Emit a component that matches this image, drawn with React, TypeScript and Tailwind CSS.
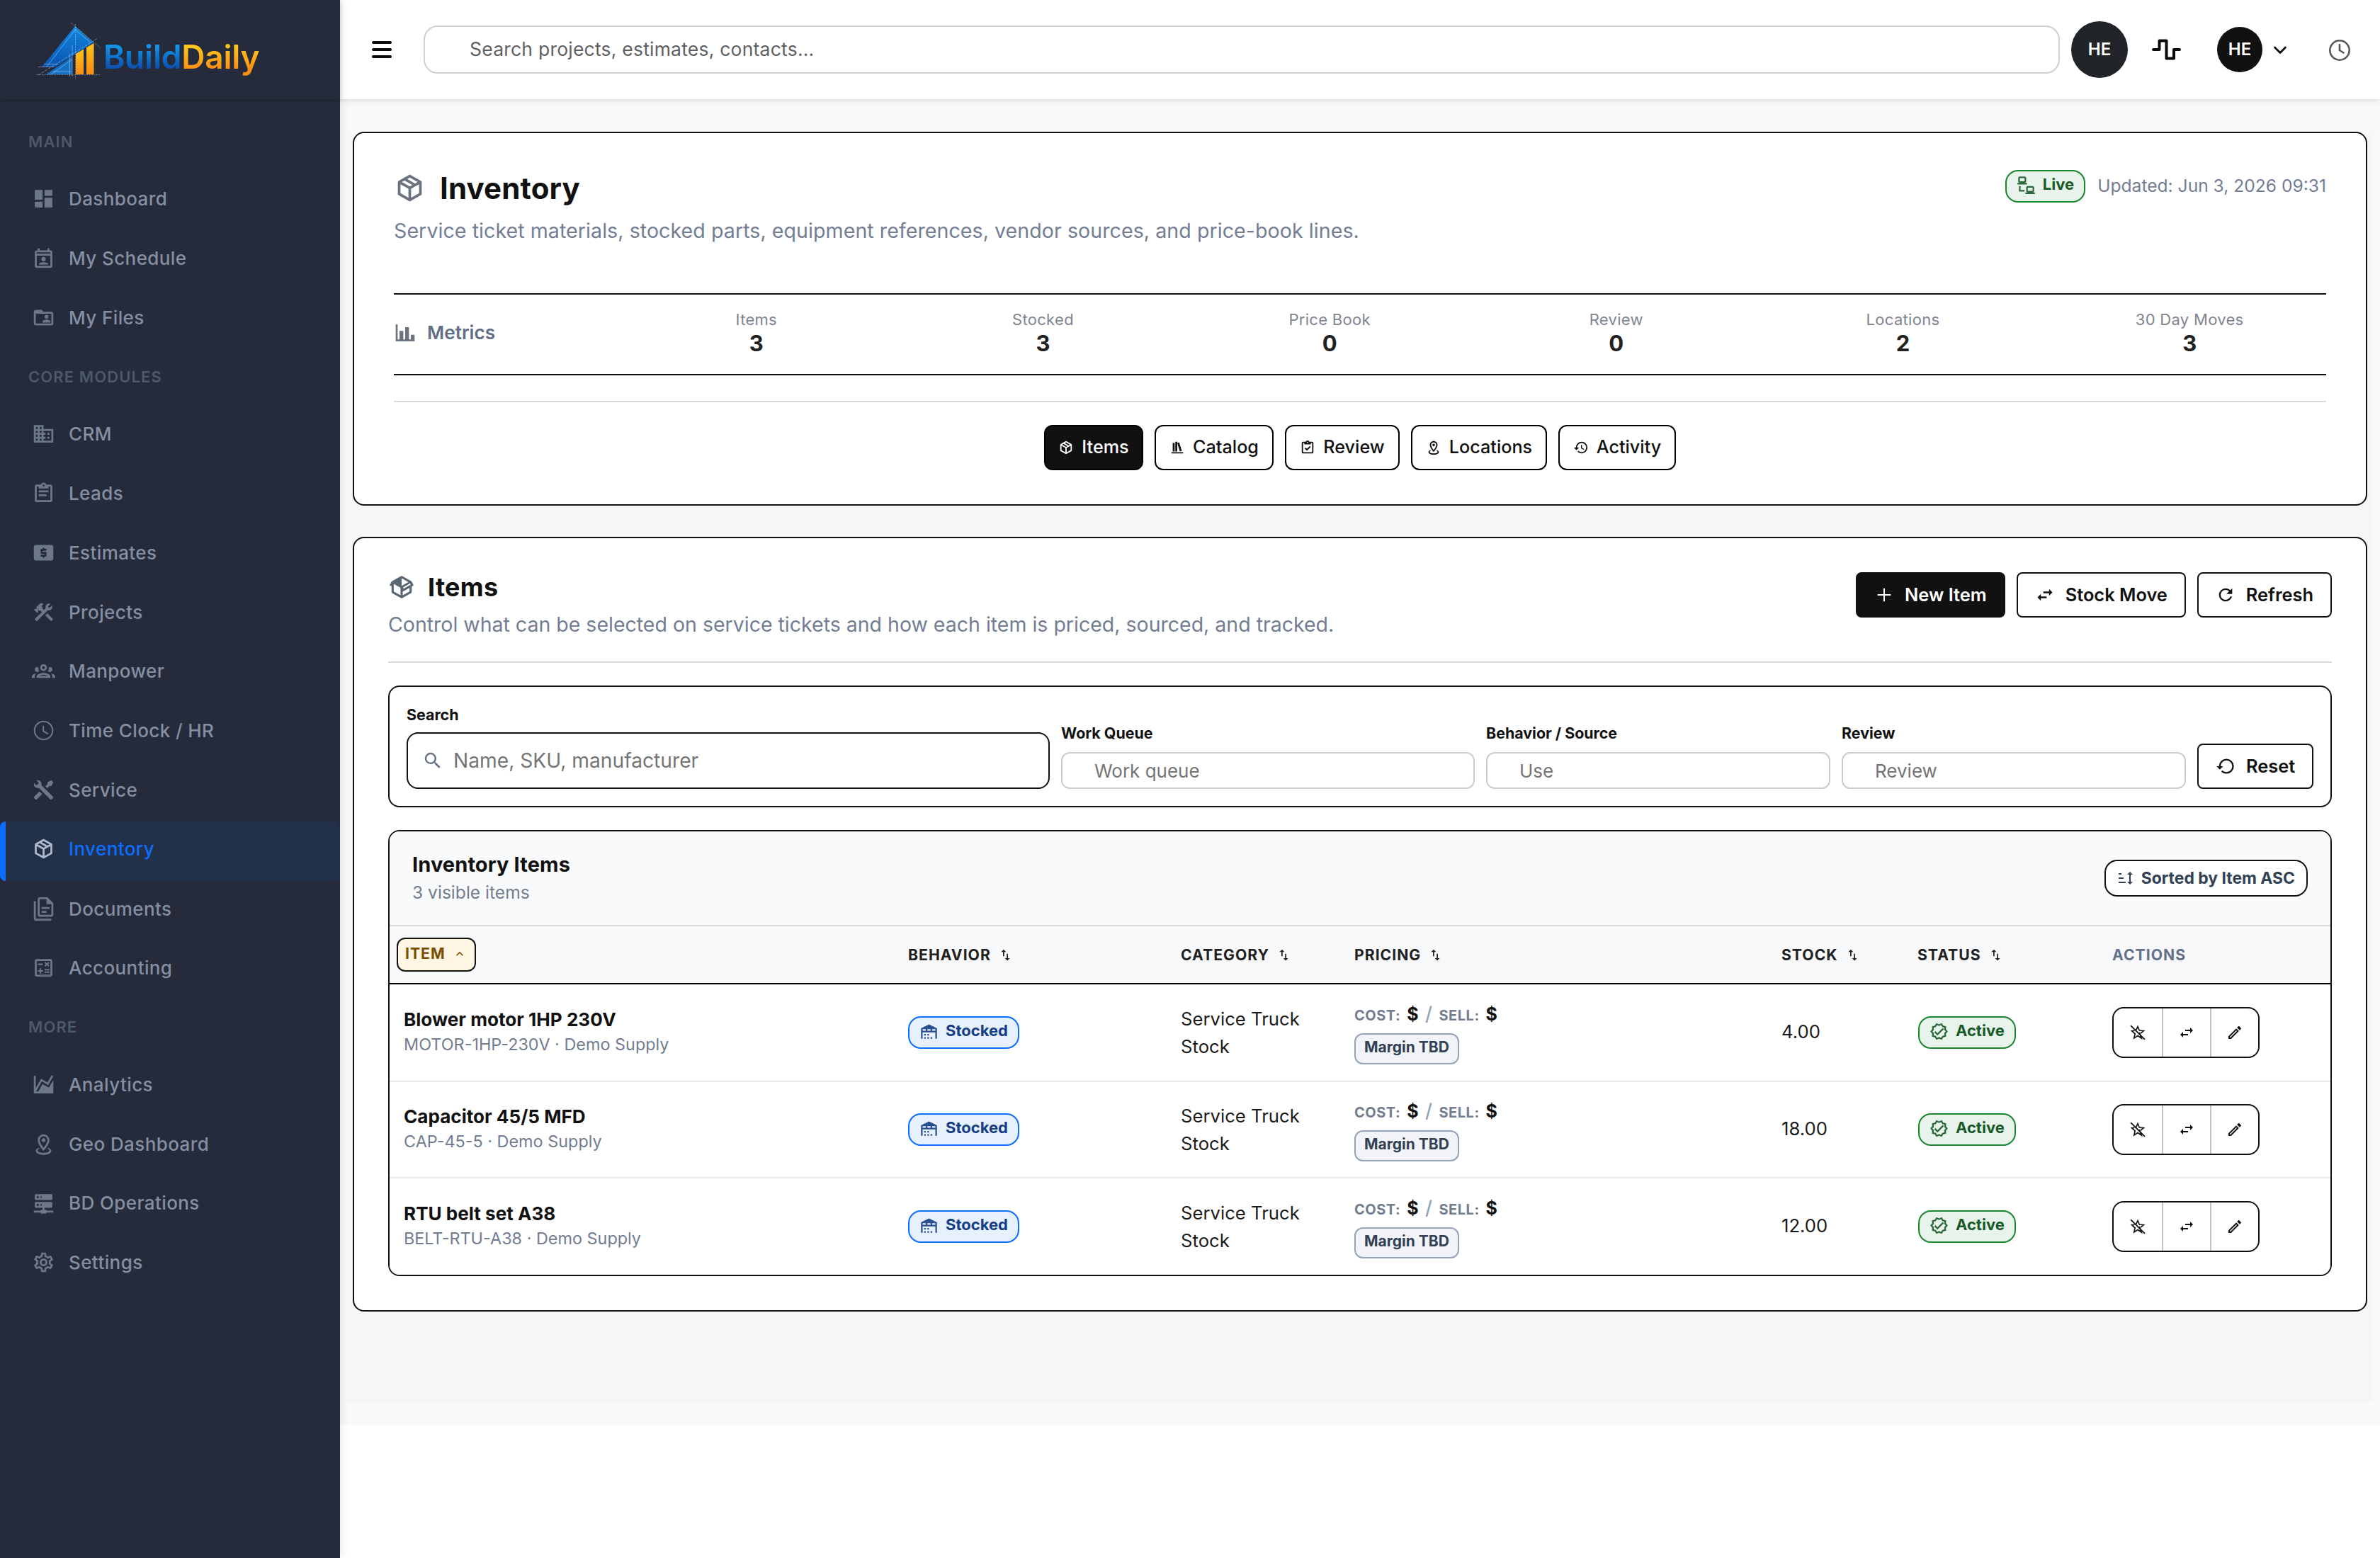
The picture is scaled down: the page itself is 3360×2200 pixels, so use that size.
import clsx from "clsx";
import React from "react";

const paths = {
  dashboard: "M13,3V9H21V3M13,21H21V11H13M3,21H11V15H3M3,13H11V3H3V13Z",
  schedule:
    "M19,4H18V2H16V4H8V2H6V4H5A2,2 0 0,0 3,6V20A2,2 0 0,0 5,22H19A2,2 0 0,0 21,20V6A2,2 0 0,0 19,4M19,20H5V9.5H19V20M5,7.5V6H19V7.5H5M12,10.8A2.2,2.2 0 0,1 14.2,13A2.2,2.2 0 0,1 12,15.2A2.2,2.2 0 0,1 9.8,13A2.2,2.2 0 0,1 12,10.8M7.3,18.8V18C7.3,16.8 10,16.1 12,16.1C14,16.1 16.7,16.8 16.7,18V18.8H7.3Z",
  files:
    "M15 14C16.33 14 19 14.67 19 16V17H11V16C11 14.67 13.67 14 15 14M15 13A2 2 0 0 0 17 11A2 2 0 0 0 15 9A2 2 0 0 0 13 11A2 2 0 0 0 15 13M22 8V18C22 19.11 21.11 20 20 20H4C2.9 20 2 19.11 2 18V6C2 4.89 2.9 4 4 4H10L12 6H20C21.1 6 22 6.9 22 8M20 8H4V18H20V8Z",
  crm: "M18,15H16V17H18M18,11H16V13H18M20,19H12V17H14V15H12V13H14V11H12V9H20M10,7H8V5H10M10,11H8V9H10M10,15H8V13H10M10,19H8V17H10M6,7H4V5H6M6,11H4V9H6M6,15H4V13H6M6,19H4V17H6M12,7V3H2V21H22V7H12Z",
  leads:
    "M19,3H14.82C14.25,1.44 12.53,0.64 11,1.2C10.14,1.5 9.5,2.16 9.18,3H5A2,2 0 0,0 3,5V19A2,2 0 0,0 5,21H19A2,2 0 0,0 21,19V5A2,2 0 0,0 19,3M12,3A1,1 0 0,1 13,4A1,1 0 0,1 12,5A1,1 0 0,1 11,4A1,1 0 0,1 12,3M7,7H17V5H19V19H5V5H7V7M17,11H7V9H17V11M15,15H7V13H15V15Z",
  cash: "M20 4H4C2.89 4 2 4.89 2 6V18C2 19.11 2.89 20 4 20H20C21.11 20 22 19.11 22 18V6C22 4.89 21.11 4 20 4M15 10H11V11H14C14.55 11 15 11.45 15 12V15C15 15.55 14.55 16 14 16H13V17H11V16H9V14H13V13H10C9.45 13 9 12.55 9 12V9C9 8.45 9.45 8 10 8H11V7H13V8H15V10Z",
  projects:
    "M13.78 15.3L19.78 21.3L21.89 19.14L15.89 13.14L13.78 15.3M17.5 10.1C17.11 10.1 16.69 10.05 16.36 9.91L4.97 21.25L2.86 19.14L10.27 11.74L8.5 9.96L7.78 10.66L6.33 9.25V12.11L5.63 12.81L2.11 9.25L2.81 8.55H5.62L4.22 7.14L7.78 3.58C8.95 2.41 10.83 2.41 12 3.58L9.89 5.74L11.3 7.14L10.59 7.85L12.38 9.63L14.2 7.75C14.06 7.42 14 7 14 6.63C14 4.66 15.56 3.11 17.5 3.11C18.09 3.11 18.61 3.25 19.08 3.53L16.41 6.2L17.91 7.7L20.58 5.03C20.86 5.5 21 6 21 6.63C21 8.55 19.45 10.1 17.5 10.1Z",
  group:
    "M12,5A3.5,3.5 0 0,0 8.5,8.5A3.5,3.5 0 0,0 12,12A3.5,3.5 0 0,0 15.5,8.5A3.5,3.5 0 0,0 12,5M12,7A1.5,1.5 0 0,1 13.5,8.5A1.5,1.5 0 0,1 12,10A1.5,1.5 0 0,1 10.5,8.5A1.5,1.5 0 0,1 12,7M5.5,8A2.5,2.5 0 0,0 3,10.5C3,11.44 3.53,12.25 4.29,12.68C4.65,12.88 5.06,13 5.5,13C5.94,13 6.35,12.88 6.71,12.68C7.08,12.47 7.39,12.17 7.62,11.81C6.89,10.86 6.5,9.7 6.5,8.5C6.5,8.41 6.5,8.31 6.5,8.22C6.2,8.08 5.86,8 5.5,8M18.5,8C18.14,8 17.8,8.08 17.5,8.22C17.5,8.31 17.5,8.41 17.5,8.5C17.5,9.7 17.11,10.86 16.38,11.81C16.5,12 16.63,12.15 16.78,12.3C16.94,12.45 17.1,12.58 17.29,12.68C17.65,12.88 18.06,13 18.5,13C18.94,13 19.35,12.88 19.71,12.68C20.47,12.25 21,11.44 21,10.5A2.5,2.5 0 0,0 18.5,8M12,14C9.66,14 5,15.17 5,17.5V19H19V17.5C19,15.17 14.34,14 12,14M4.71,14.55C2.78,14.78 0,15.76 0,17.5V19H3V17.07C3,16.06 3.69,15.22 4.71,14.55M19.29,14.55C20.31,15.22 21,16.06 21,17.07V19H24V17.5C24,15.76 21.22,14.78 19.29,14.55M12,16C13.53,16 15.24,16.5 16.23,17H7.77C8.76,16.5 10.47,16 12,16Z",
  clock:
    "M12 20.5A8.5 8.5 0 1 0 12 3.5A8.5 8.5 0 0 0 12 20.5M12 2A10 10 0 1 1 12 22A10 10 0 0 1 12 2M12.5 7V12.25L17 14.92L16.25 16.15L11 13V7H12.5Z",
  tools:
    "M21.71 20.29L20.29 21.71A1 1 0 0 1 18.88 21.71L7 9.85A3.81 3.81 0 0 1 6 10A4 4 0 0 1 2.22 4.7L4.76 7.24L5.29 6.71L6.71 5.29L7.24 4.76L4.7 2.22A4 4 0 0 1 10 6A3.81 3.81 0 0 1 9.85 7L21.71 18.88A1 1 0 0 1 21.71 20.29M2.29 18.88A1 1 0 0 0 2.29 20.29L3.71 21.71A1 1 0 0 0 5.12 21.71L10.59 16.25L7.76 13.42M20 2L16 4V6L13.83 8.17L15.83 10.17L18 8H20L22 4Z",
  package:
    "M21,16.5C21,16.88 20.79,17.21 20.47,17.38L12.57,21.82C12.41,21.94 12.21,22 12,22C11.79,22 11.59,21.94 11.43,21.82L3.53,17.38C3.21,17.21 3,16.88 3,16.5V7.5C3,7.12 3.21,6.79 3.53,6.62L11.43,2.18C11.59,2.06 11.79,2 12,2C12.21,2 12.41,2.06 12.57,2.18L20.47,6.62C20.79,6.79 21,7.12 21,7.5V16.5M12,4.15L10.11,5.22L16,8.61L17.96,7.5L12,4.15M6.04,7.5L12,10.85L13.96,9.75L8.08,6.35L6.04,7.5M5,15.91L11,19.29V12.58L5,9.21V15.91M19,15.91V9.21L13,12.58V19.29L19,15.91Z",
  packageOpen:
    "M2,10.96C1.5,10.68 1.35,10.07 1.63,9.59L3.13,7C3.24,6.8 3.41,6.66 3.6,6.58L11.43,2.18C11.59,2.06 11.79,2 12,2C12.21,2 12.41,2.06 12.57,2.18L20.47,6.62C20.66,6.72 20.82,6.88 20.91,7.08L22.36,9.6C22.64,10.08 22.47,10.69 22,10.96L21,11.54V16.5C21,16.88 20.79,17.21 20.47,17.38L12.57,21.82C12.41,21.94 12.21,22 12,22C11.79,22 11.59,21.94 11.43,21.82L3.53,17.38C3.21,17.21 3,16.88 3,16.5V10.96C2.7,11.13 2.32,11.14 2,10.96M12,4.15V4.15L12,10.85V10.85L17.96,7.5L12,4.15M5,15.91L11,19.29V12.58L5,9.21V15.91M19,15.91V12.69L14,15.59C13.67,15.77 13.3,15.76 13,15.6V19.29L19,15.91M13.85,13.36L20.13,9.73L19.55,8.72L13.27,12.35L13.85,13.36Z",
  documents:
    "M16 0H8C6.9 0 6 .9 6 2V18C6 19.1 6.9 20 8 20H20C21.1 20 22 19.1 22 18V6L16 0M20 18H8V2H15V7H20V18M4 4V22H20V24H4C2.9 24 2 23.1 2 22V4H4M10 10V12H18V10H10M10 14V16H15V14H10Z",
  calculator:
    "M19,3H5C3.9,3 3,3.9 3,5V19C3,20.1 3.9,21 5,21H19C20.1,21 21,20.1 21,19V5C21,3.9 20.1,3 19,3M19,19H5V5H19V19M6.2,7.7H11.2V9.2H6.2V7.7M13,15.8H18V17.2H13V15.8M13,13.2H18V14.7H13V13.2M8,18H9.5V16H11.5V14.5H9.5V12.5H8V14.5H6V16H8V18M14.1,10.9L15.5,9.5L16.9,10.9L18,9.9L16.6,8.5L18,7.1L16.9,6L15.5,7.4L14.1,6L13,7.1L14.4,8.5L13,9.9L14.1,10.9Z",
  analytics:
    "M17.45,15.18L22,7.31V21H2V3H4V15.54L9.5,6L16,9.78L20.24,2.45L21.97,3.45L16.74,12.5L10.23,8.75L4.31,19H6.57L10.96,11.44L17.45,15.18Z",
  marker:
    "M12 4C14.2 4 16 5.8 16 8C16 10.1 13.9 13.5 12 15.9C10.1 13.4 8 10.1 8 8C8 5.8 9.8 4 12 4M12 2C8.7 2 6 4.7 6 8C6 12.5 12 19 12 19S18 12.4 18 8C18 4.7 15.3 2 12 2M12 6C10.9 6 10 6.9 10 8S10.9 10 12 10 14 9.1 14 8 13.1 6 12 6M20 19C20 21.2 16.4 23 12 23S4 21.2 4 19C4 17.7 5.2 16.6 7.1 15.8L7.7 16.7C6.7 17.2 6 17.8 6 18.5C6 19.9 8.7 21 12 21S18 19.9 18 18.5C18 17.8 17.3 17.2 16.2 16.7L16.8 15.8C18.8 16.6 20 17.7 20 19Z",
  server:
    "M13,19H14A1,1 0 0,1 15,20H22V22H15A1,1 0 0,1 14,23H10A1,1 0 0,1 9,22H2V20H9A1,1 0 0,1 10,19H11V17H4A1,1 0 0,1 3,16V12A1,1 0 0,1 4,11H20A1,1 0 0,1 21,12V16A1,1 0 0,1 20,17H13V19M4,3H20A1,1 0 0,1 21,4V8A1,1 0 0,1 20,9H4A1,1 0 0,1 3,8V4A1,1 0 0,1 4,3M9,7H10V5H9V7M9,15H10V13H9V15M5,5V7H7V5H5M5,13V15H7V13H5Z",
  cog: "M12,8A4,4 0 0,1 16,12A4,4 0 0,1 12,16A4,4 0 0,1 8,12A4,4 0 0,1 12,8M12,10A2,2 0 0,0 10,12A2,2 0 0,0 12,14A2,2 0 0,0 14,12A2,2 0 0,0 12,10M10,22C9.75,22 9.54,21.82 9.5,21.58L9.13,18.93C8.5,18.68 7.96,18.34 7.44,17.94L4.95,18.95C4.73,19.03 4.46,18.95 4.34,18.73L2.34,15.27C2.21,15.05 2.27,14.78 2.46,14.63L4.57,12.97L4.5,12L4.57,11L2.46,9.37C2.27,9.22 2.21,8.95 2.34,8.73L4.34,5.27C4.46,5.05 4.73,4.96 4.95,5.05L7.44,6.05C7.96,5.66 8.5,5.32 9.13,5.07L9.5,2.42C9.54,2.18 9.75,2 10,2H14C14.25,2 14.46,2.18 14.5,2.42L14.87,5.07C15.5,5.32 16.04,5.66 16.56,6.05L19.05,5.05C19.27,4.96 19.54,5.05 19.66,5.27L21.66,8.73C21.79,8.95 21.73,9.22 21.54,9.37L19.43,11L19.5,12L19.43,13L21.54,14.63C21.73,14.78 21.79,15.05 21.66,15.27L19.66,18.73C19.54,18.95 19.27,19.04 19.05,18.95L16.56,17.95C16.04,18.34 15.5,18.68 14.87,18.93L14.5,21.58C14.46,21.82 14.25,22 14,22H10M11.25,4L10.88,6.61C9.68,6.86 8.62,7.5 7.85,8.39L5.44,7.35L4.69,8.65L6.8,10.2C6.4,11.37 6.4,12.64 6.8,13.8L4.68,15.36L5.43,16.66L7.86,15.62C8.63,16.5 9.68,17.14 10.87,17.38L11.24,20H12.76L13.13,17.39C14.32,17.14 15.37,16.5 16.14,15.62L18.57,16.66L19.32,15.36L17.2,13.81C17.6,12.64 17.6,11.37 17.2,10.2L19.31,8.65L18.56,7.35L16.15,8.39C15.38,7.5 14.32,6.86 13.12,6.62L12.75,4H11.25Z",
  lan: "M4,1C2.89,1 2,1.89 2,3V7C2,8.11 2.89,9 4,9H1V11H13V9H10C11.11,9 12,8.11 12,7V3C12,1.89 11.11,1 10,1H4M4,3H10V7H4V3M3,13V18L3,20H10V18H5V13H3M14,13C12.89,13 12,13.89 12,15V19C12,20.11 12.89,21 14,21H11V23H23V21H20C21.11,21 22,20.11 22,19V15C22,13.89 21.11,13 20,13H14M14,15H20V19H14V15Z",
  chart: "M22,21H2V3H4V19H6V10H10V19H12V6H16V19H18V14H22V21Z",
  bookshelf: "M9 3V18H12V3H9M12 5L16 18L19 17L15 4L12 5M5 5V18H8V5H5M3 19V21H21V19H3Z",
  clipboardCheck:
    "M19,3H14.82C14.4,1.84 13.3,1 12,1C10.7,1 9.6,1.84 9.18,3H5A2,2 0 0,0 3,5V19A2,2 0 0,0 5,21H19A2,2 0 0,0 21,19V5A2,2 0 0,0 19,3M12,3A1,1 0 0,1 13,4A1,1 0 0,1 12,5A1,1 0 0,1 11,4A1,1 0 0,1 12,3M7,7H17V5H19V19H5V5H7V7M7.5,13.5L9,12L11,14L15.5,9.5L17,11L11,17L7.5,13.5Z",
  history:
    "M13.5,8H12V13L16.28,15.54L17,14.33L13.5,12.25V8M13,3A9,9 0 0,0 4,12H1L4.96,16.03L9,12H6A7,7 0 0,1 13,5A7,7 0 0,1 20,12A7,7 0 0,1 13,19C11.07,19 9.32,18.21 8.06,16.94L6.64,18.36C8.27,20 10.5,21 13,21A9,9 0 0,0 22,12A9,9 0 0,0 13,3",
  restore:
    "M13,3A9,9 0 0,0 4,12H1L4.96,16.03L9,12H6A7,7 0 0,1 13,5A7,7 0 0,1 20,12A7,7 0 0,1 13,19C11.07,19 9.32,18.21 8.06,16.94L6.64,18.36C8.27,20 10.5,21 13,21A9,9 0 0,0 22,12A9,9 0 0,0 13,3",
  refresh:
    "M17.65,6.35C16.2,4.9 14.21,4 12,4A8,8 0 0,0 4,12A8,8 0 0,0 12,20C15.73,20 18.84,17.45 19.73,14H17.65C16.83,16.33 14.61,18 12,18A6,6 0 0,1 6,12A6,6 0 0,1 12,6C13.66,6 15.14,6.69 16.22,7.78L13,11H20V4L17.65,6.35Z",
  swapH: "M21,9L17,5V8H10V10H17V13M7,11L3,15L7,19V16H14V14H7V11Z",
  swapV: "M9,3L5,7H8V14H10V7H13M16,17V10H14V17H11L15,21L19,17H16Z",
  plus: "M20,12.9H12.9V20H11.1V12.9H4V11.1H11.1V4H12.9V11.1H20V12.9Z",
  magnify:
    "M9.5,3A6.5,6.5 0 0,1 16,9.5C16,11.11 15.41,12.59 14.44,13.73L14.71,14H15.5L20.5,19L19,20.5L14,15.5V14.71L13.73,14.44C12.59,15.41 11.11,16 9.5,16A6.5,6.5 0 0,1 3,9.5A6.5,6.5 0 0,1 9.5,3M9.5,5C7,5 5,7 5,9.5C5,12 7,14 9.5,14C12,14 14,12 14,9.5C14,7 12,5 9.5,5Z",
  chevronUp: "M7.41,15.41L12,10.83L16.59,15.41L18,14L12,8L6,14L7.41,15.41Z",
  sort: "M18 21L14 17H17V7H14L18 3L22 7H19V17H22M2 19V17H12V19M2 13V11H9V13M2 7V5H6V7H2Z",
  warehouse:
    "M6 19H8V21H6V19M12 3L2 8V21H4V13H20V21H22V8L12 3M8 11H4V9H8V11M14 11H10V9H14V11M20 11H16V9H20V11M6 15H8V17H6V15M10 15H12V17H10V15M10 19H12V21H10V19M14 19H16V21H14V19Z",
  decagram:
    "M23 12L20.6 9.2L20.9 5.5L17.3 4.7L15.4 1.5L12 3L8.6 1.5L6.7 4.7L3.1 5.5L3.4 9.2L1 12L3.4 14.8L3.1 18.5L6.7 19.3L8.6 22.5L12 21L15.4 22.5L17.3 19.3L20.9 18.5L20.6 14.8L23 12M18.7 16.9L16 17.5L14.6 19.9L12 18.8L9.4 19.9L8 17.5L5.3 16.9L5.5 14.1L3.7 12L5.5 9.9L5.3 7.1L8 6.5L9.4 4.1L12 5.2L14.6 4.1L16 6.5L18.7 7.1L18.5 9.9L20.3 12L18.5 14.1L18.7 16.9M16.6 7.6L18 9L10 17L6 13L7.4 11.6L10 14.2L16.6 7.6Z",
  pencil:
    "M14.06,9L15,9.94L5.92,19H5V18.08L14.06,9M17.66,3C17.41,3 17.15,3.1 16.96,3.29L15.13,5.12L18.88,8.87L20.71,7.04C21.1,6.65 21.1,6 20.71,5.63L18.37,3.29C18.17,3.09 17.92,3 17.66,3M14.06,6.19L3,17.25V21H6.75L17.81,9.94L14.06,6.19Z",
};

type IconName = keyof typeof paths;

const Icon = ({ name, className }: { name: IconName; className?: string }) => (
  <svg viewBox="0 0 24 24" fill="currentColor" className={clsx("shrink-0", className)}>
    <path d={paths[name]} fillRule="evenodd" />
  </svg>
);

const StarOff = ({ className }: { className?: string }) => (
  <svg viewBox="0 0 24 24" fill="none" stroke="currentColor" className={className}>
    <path
      d="M9.6 8.6L12 3.6L14.3 9L20.4 9.6L15.8 13.4M14 12L17.2 20L12 16.6L6.8 20L8.2 13.9L3.6 9.8L7.5 9.4"
      strokeWidth="1.7"
    />
    <path d="M2 2.2L22 21.8" strokeWidth="1.8" />
  </svg>
);

const navGroups: { title: string; items: { icon: IconName; label: string }[] }[] = [
  {
    title: "MAIN",
    items: [
      { icon: "dashboard", label: "Dashboard" },
      { icon: "schedule", label: "My Schedule" },
      { icon: "files", label: "My Files" },
    ],
  },
  {
    title: "CORE MODULES",
    items: [
      { icon: "crm", label: "CRM" },
      { icon: "leads", label: "Leads" },
      { icon: "cash", label: "Estimates" },
      { icon: "projects", label: "Projects" },
      { icon: "group", label: "Manpower" },
      { icon: "clock", label: "Time Clock / HR" },
      { icon: "tools", label: "Service" },
      { icon: "package", label: "Inventory" },
      { icon: "documents", label: "Documents" },
      { icon: "calculator", label: "Accounting" },
    ],
  },
  {
    title: "MORE",
    items: [
      { icon: "analytics", label: "Analytics" },
      { icon: "marker", label: "Geo Dashboard" },
      { icon: "server", label: "BD Operations" },
      { icon: "cog", label: "Settings" },
    ],
  },
];

const metrics = [
  { label: "Items", value: 3 },
  { label: "Stocked", value: 3 },
  { label: "Price Book", value: 0 },
  { label: "Review", value: 0 },
  { label: "Locations", value: 2 },
  { label: "30 Day Moves", value: 3 },
];

const tabs: { icon: IconName; label: string; width: string }[] = [
  { icon: "package", label: "Items", width: "w-[140px]" },
  { icon: "bookshelf", label: "Catalog", width: "w-[168px]" },
  { icon: "clipboardCheck", label: "Review", width: "w-[162px]" },
  { icon: "marker", label: "Locations", width: "w-[192px]" },
  { icon: "history", label: "Activity", width: "w-[166px]" },
];

const columns = ["BEHAVIOR", "CATEGORY", "PRICING", "STOCK", "STATUS"];

const rows = [
  { name: "Blower motor 1HP 230V", sku: "MOTOR-1HP-230V · Demo Supply", stock: "4.00", height: "h-[138px]" },
  { name: "Capacitor 45/5 MFD", sku: "CAP-45-5 · Demo Supply", stock: "18.00", height: "h-[136px]" },
  { name: "RTU belt set A38", sku: "BELT-RTU-A38 · Demo Supply", stock: "12.00", height: "h-[136px]" },
];

const tableGrid = "grid grid-cols-[712px_385px_245px_603px_192px_275px_1fr]";

const Logo = () => (
  <div className="flex h-[140px] shrink-0 items-start pl-[50px] pt-[30px] shadow-[0_2px_6px_rgba(0,0,0,0.18)]">
    <svg width="97" height="84" viewBox="50 30 97 84" fill="none" className="shrink-0">
      <defs>
        <linearGradient id="roof" x1="0" y1="0" x2="0" y2="1">
          <stop offset="0" stopColor="#1187dc" />
          <stop offset="1" stopColor="#0a55b5" />
        </linearGradient>
        <linearGradient id="bars" x1="0" y1="0" x2="0" y2="1">
          <stop offset="0" stopColor="#fdc51c" />
          <stop offset="1" stopColor="#fb8c14" />
        </linearGradient>
      </defs>
      <path d="M106 37L132 60L78 94.5H59Z" fill="url(#roof)" />
      <path d="M102 80V105H65Z" fill="#1670c4" />
      <path d="M107 76L118 69.5V105H107Z" fill="url(#bars)" />
      <path d="M122 67L132.500 61V105H122Z" fill="url(#bars)" />
      <g stroke="#cfe3f5" strokeOpacity="0.55" strokeWidth="0.8">
        <path d="M52 105.500H141" strokeDasharray="2 1.500" />
        <path d="M106.500 34V112" strokeDasharray="2 1.500" />
        <path d="M100 32L142 68" strokeDasharray="3 1.500" />
        <path d="M54 106L138 54" strokeDasharray="4 1.500" />
        <path d="M66 94L106 42L128 60" />
        <path d="M62 90.500H82M54 94.500H76M75 101H100M98.500 76V108M102 64V108M72 105L102 84" />
      </g>
    </svg>
    <div className="-ml-px flex pt-[22px] text-[46px] font-semibold leading-[56px] tracking-[-0.200px]">
      <span className="bg-linear-to-b from-[#1295e8] from-25% to-[#0d4fae] to-80% bg-clip-text text-transparent">Build</span>
      <span className="bg-linear-to-b from-[#fdc41c] from-25% to-[#fb8c14] to-85% bg-clip-text text-transparent">Daily</span>
    </div>
  </div>
);

const Sidebar = () => (
  <aside className="relative z-10 flex h-[2200px] w-[480px] shrink-0 flex-col bg-[#252b3b] shadow-[0_0_14px_rgba(0,0,0,0.12)]">
    <Logo />
    <nav className="pt-[21px]">
      {navGroups.map((group) => (
        <div key={group.title}>
          <div className="flex h-[80.500px] items-center pb-[2px] pl-[40px] text-[22px] font-semibold tracking-[1.100px] text-[#4d586b]">
            {group.title}
          </div>
          {group.items.map((item) => {
            const active = item.label === "Inventory";
            return (
              <a
                key={item.label}
                className={clsx(
                  "flex h-[83.800px] items-center gap-[19px] rounded-[8px] border-l-[8px] pl-[37px] text-[26px] font-medium tracking-[0.400px]",
                  active ? "border-[#0d6efd] bg-[#23304a] pb-[7px] text-[#0d6efd]" : "border-transparent pb-[5px] text-[#848fa3]"
                )}
              >
                <Icon name={item.icon} className={clsx("size-[33px]", active ? "text-[#adbac7]" : "text-[#6c7889]")} />
                {item.label}
              </a>
            );
          })}
        </div>
      ))}
    </nav>
  </aside>
);

const Topbar = () => (
  <header className="relative z-[5] flex h-[140px] items-center bg-white pl-[45px] shadow-[0_2px_8px_rgba(0,0,0,0.12)]">
    <button className="flex w-7 flex-col gap-[6px]">
      <span className="h-1 rounded-full bg-[#0b0b0b]" />
      <span className="h-1 rounded-full bg-[#0b0b0b]" />
      <span className="h-1 rounded-full bg-[#0b0b0b]" />
    </button>
    <div className="ml-[45px] flex h-[68px] w-[2310px] items-center rounded-[20px] border-2 border-[#cfd0d1] pl-[63px] text-[26.500px] tracking-[0.220px] text-[#5e6164]">
      Search projects, estimates, contacts...
    </div>
    <div className="ml-4 flex size-20 items-center justify-center rounded-full bg-[#212529] text-[24px] font-semibold text-white">
      HE
    </div>
    <svg width="44" height="34" viewBox="0 0 44 34" fill="none" stroke="#0b0b0b" strokeWidth="4" strokeLinecap="round" strokeLinejoin="round" className="ml-8">
      <path d="M4 17H12.500V4.500H22.500V29.500H33V17H41" />
    </svg>
    <div className="ml-[50px] flex size-16 items-center justify-center rounded-full bg-[#111] text-[24px] font-semibold text-white">
      HE
    </div>
    <svg width="20" height="12" viewBox="0 0 20 12" fill="none" stroke="#0b0b0b" strokeWidth="2.800" strokeLinecap="round" strokeLinejoin="round" className="ml-[15px] mt-[2px]">
      <path d="M2.500 2L10 9.500L17.500 2" />
    </svg>
    <svg width="32" height="32" viewBox="0 0 32 32" fill="none" stroke="#55595e" strokeWidth="2.600" strokeLinecap="round" strokeLinejoin="round" className="ml-[58px] mt-[2px]">
      <circle cx="16" cy="16" r="13.700" />
      <path d="M16 8V16L21.500 19.500" />
    </svg>
  </header>
);

const badgeStyles = {
  green: "border-[#1a862f] bg-[#e8f3ec] text-[#185a26]",
  blue: "border-[#0d6efd] bg-[#e7f0fd] text-[#153e86]",
};

const Badge = ({ color, icon, label }: { color: keyof typeof badgeStyles; icon: IconName; label: string }) => (
  <span
    className={clsx(
      "flex h-[46px] w-fit items-center gap-[10px] rounded-[18px] border-2 pl-[14px] pr-[14px] text-[22px] font-bold",
      badgeStyles[color]
    )}
  >
    <Icon name={icon} className="mb-[3px] size-[27px] opacity-90" />
    <span className="mb-[6px] leading-none">{label}</span>
  </span>
);

const Button = ({ icon, label, dark }: { icon: IconName; label: string; dark?: boolean }) => (
  <button
    className={clsx(
      "flex h-16 items-center gap-[15px] rounded-[8px] border-2 border-[#111] px-6 text-[25.400px] font-semibold",
      dark ? "bg-[#111] text-white" : "bg-white text-[#111]"
    )}
  >
    <Icon name={icon} className="size-7" />
    {label}
  </button>
);

const SummaryCard = () => (
  <section className="h-[528px] rounded-[16px] border-2 border-[#111] bg-white px-14">
    <div className="flex h-[226px] items-start justify-between pt-[52px]">
      <div>
        <div className="mt-[3px] flex h-11 items-center gap-5">
          <Icon name="package" className="size-[45px] text-[#6b7280]" />
          <h1 className="text-[42px] font-bold tracking-[0.150px] text-[#111]">Inventory</h1>
        </div>
        <p className="mt-[19px] text-[28.600px] leading-10 tracking-[0.050px] text-[#737d93]">
          Service ticket materials, stocked parts, equipment references, vendor sources, and price-book lines.
        </p>
      </div>
      <div className="flex items-center gap-[17px]">
        <Badge color="green" icon="lan" label="Live" />
        <span className="pb-[2px] text-[24.600px] leading-none text-[#737d93]">Updated: Jun 3, 2026 09:31</span>
      </div>
    </div>
    <div className="flex h-[116px] items-center border-y-2 border-[#111]">
      <div className="flex w-[319px] items-center gap-[15px] pb-1 text-[26.200px] font-semibold text-[#616e86]">
        <Icon name="chart" className="size-8 text-[#6b7280]" />
        Metrics
      </div>
      <div className="grid flex-1 grid-cols-6 gap-[19px] pb-[8px]">
        {metrics.map((metric) => (
          <div key={metric.label} className="text-center">
            <div className="text-[22px] leading-[33px] tracking-[0.300px] text-[#7f8590]">{metric.label}</div>
            <div className="text-[31px] font-bold leading-[33px] text-[#212121]">{metric.value}</div>
          </div>
        ))}
      </div>
    </div>
    <div className="mt-9 flex justify-center gap-4 border-t-2 border-[#d8d9da] pt-8">
      {tabs.map((tab, index) => (
        <button
          key={tab.label}
          className={clsx(
            "flex h-16 items-center justify-center gap-[11px] rounded-[12px] border-2 border-black text-[25.200px] font-medium",
            tab.width,
            index === 0 ? "bg-[#111] text-white" : "bg-white text-[#111]"
          )}
        >
          <Icon name={tab.icon} className="size-[22px]" />
          {tab.label}
        </button>
      ))}
    </div>
  </section>
);

const FilterField = ({ label, placeholder }: { label: string; placeholder: string }) => (
  <div className="flex flex-col justify-end">
    <label className="mb-3 text-[21.400px] font-bold leading-[30px] text-[#111]">{label}</label>
    <div className="flex h-[52px] items-center rounded-[12px] border-2 border-[#cdcdcd] pl-[45px] text-[26px] text-[#757575]">
      {placeholder}
    </div>
  </div>
);

const Filters = () => (
  <div className="mt-8 grid h-[172px] grid-cols-[908px_584px_486px_486px_164px] gap-4 rounded-[16px] border-2 border-[#111] px-6 pb-6">
    <div className="flex flex-col justify-end">
      <label className="mb-[10px] text-[21.400px] font-bold leading-[30px] text-[#111]">Search</label>
      <div className="flex h-20 items-center gap-[14px] rounded-[16px] border-2 border-[#111] pl-5 text-[28.200px] text-[#757575]">
        <Icon name="magnify" className="size-[30px] text-[#64708a]" />
        Name, SKU, manufacturer
      </div>
    </div>
    <FilterField label="Work Queue" placeholder="Work queue" />
    <FilterField label="Behavior / Source" placeholder="Use" />
    <FilterField label="Review" placeholder="Review" />
    <div className="flex flex-col justify-end">
      <Button icon="restore" label="Reset" />
    </div>
  </div>
);

const ItemsTable = () => (
  <div className="mt-8 h-[630px] overflow-hidden rounded-[16px] border-2 border-[#111]">
    <div className="flex h-[134px] items-center justify-between border-b-2 border-[#d8d9da] bg-[#f9fafc] pl-8 pr-8">
      <div>
        <h3 className="text-[29px] font-bold leading-[38px] tracking-[0.100px] text-[#111]">Inventory Items</h3>
        <p className="mt-[2px] text-[24.600px] leading-9 text-[#737d90]">3 visible items</p>
      </div>
      <div className="flex h-[52px] items-center gap-[10px] rounded-[18px] border-2 border-[#111] bg-white px-4 text-[22.900px] font-bold text-[#334155]">
        <Icon name="sort" className="size-6" />
        Sorted by Item ASC
      </div>
    </div>
    <div className={clsx(tableGrid, "h-[82px] items-center border-b-2 border-black bg-[#f7f8fa] text-[21.200px] font-bold tracking-[1px] text-[#212121]")}>
      <div className="pl-[10px]">
        <span className="flex h-12 w-28 items-center gap-[10px] rounded-[12px] border-2 border-[#111] bg-[#fff6e4] pb-[2px] pl-[10px] text-[#7a4f00]">
          ITEM
          <Icon name="chevronUp" className="size-5" />
        </span>
      </div>
      {columns.map((column) => (
        <div key={column} className="flex items-center gap-[10px] pl-5 pt-[2px]">
          {column}
          <Icon name="swapV" className="size-[21px]" />
        </div>
      ))}
      <div className="pl-5 pt-[2px] text-[#64708a]">ACTIONS</div>
    </div>
    {rows.map((row, index) => (
      <div
        key={row.name}
        className={clsx(tableGrid, "items-center bg-white text-[25.700px] text-[#1a1a1a]", row.height, index < 2 && "border-b-2 border-[#ebebeb]")}
      >
        <div className="pb-[3px] pl-5">
          <div className="text-[26.100px] font-bold leading-9 text-[#111]">{row.name}</div>
          <div className="text-[23.400px] leading-[34px] text-[#737d90]">{row.sku}</div>
        </div>
        <div className="pb-px pl-5">
          <Badge color="blue" icon="warehouse" label="Stocked" />
        </div>
        <div className="px-5 pb-px leading-[39px]">Service Truck Stock</div>
        <div className="pl-5">
          <div className="flex items-baseline gap-[9px] text-[20px] font-bold leading-[38px] tracking-[0.500px] text-[#737d90]">
            <span>COST:</span>
            <span className="text-[25px] text-[#111]">$</span>
            <span className="text-[27px] font-medium text-[#94a3b8]">/</span>
            <span>SELL:</span>
            <span className="text-[25px] text-[#111]">$</span>
          </div>
          <span className="mt-[6px] flex h-11 w-[148px] items-center justify-center rounded-[12px] border-2 border-[#94a3b8] bg-[#f1f3f8] pb-[5px] text-[21px] font-bold text-[#334155]">
            Margin TBD
          </span>
        </div>
        <div className="pb-[2px] pl-5">{row.stock}</div>
        <div className="pb-px pl-[21px]">
          <Badge color="green" icon="decagram" label="Active" />
        </div>
        <div className="pl-5">
          <div className="grid h-[72px] w-[208px] grid-cols-[70px_68px_66px] divide-x-2 divide-[#c4c4c4] overflow-hidden rounded-[16px] border-2 border-[#111] text-[#111]">
            <button className="flex items-center justify-center">
              <StarOff className="size-6" />
            </button>
            <button className="flex items-center justify-center">
              <Icon name="swapH" className="size-6" />
            </button>
            <button className="flex items-center justify-center">
              <Icon name="pencil" className="size-6" />
            </button>
          </div>
        </div>
      </div>
    ))}
  </div>
);

const ItemsCard = () => (
  <section className="mt-11 h-[1094px] rounded-[16px] border-2 border-[#111] bg-white px-12">
    <div className="flex h-[176px] items-start justify-between border-b-2 border-[#d8d9da] pt-12">
      <div>
        <div className="flex h-[42px] items-center gap-[18px]">
          <Icon name="packageOpen" className="size-[38px] text-[#5b6675]" />
          <h2 className="text-[36px] font-bold tracking-[0.300px] text-[#111]">Items</h2>
        </div>
        <p className="mt-[12px] text-[28.500px] leading-10 text-[#737d93]">
          Control what can be selected on service tickets and how each item is priced, sourced, and tracked.
        </p>
      </div>
      <div className="flex gap-4">
        <Button icon="plus" label="New Item" dark />
        <Button icon="swapH" label="Stock Move" />
        <Button icon="refresh" label="Refresh" />
      </div>
    </div>
    <Filters />
    <ItemsTable />
  </section>
);

const App = () => {
  return (
    <div className="flex h-[2200px] w-[3360px] overflow-hidden bg-white font-['Inter',sans-serif]">
      <Sidebar />
      <div className="flex flex-1 flex-col">
        <Topbar />
        <main className="h-[1872px] bg-[#f8f9fb] px-[10px] pt-[46px]">
          <div className="h-[1794px] bg-[#f5f6f8] px-2">
            <SummaryCard />
            <ItemsCard />
          </div>
        </main>
      </div>
    </div>
  );
};

export default App;
